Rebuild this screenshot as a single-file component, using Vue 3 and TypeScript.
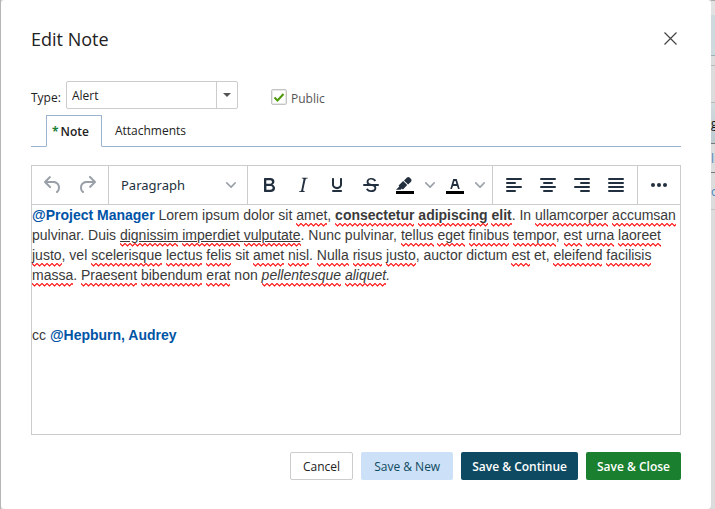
<script setup lang="ts">
import { ref } from 'vue'

interface Tool {
  name: string
  paths: string[]
}

const noteType = ref('Alert')
const isPublic = ref(true)
const activeTab = ref('note')

const history: Tool[] = [
  { name: 'Undo', paths: ['M6.4 8H12c3.7 0 6.2 2 6.8 5.1.6 2.7-.4 5.6-2.3 6.8a1 1 0 01-1-1.8c1.1-.6 1.8-2.7 1.4-4.6-.5-2.1-2.1-3.5-4.9-3.5H6.4l3.3 3.3a1 1 0 11-1.4 1.4l-5-5a1 1 0 010-1.4l5-5a1 1 0 011.4 1.4L6.4 8z'] },
  { name: 'Redo', paths: ['M17.6 10H12c-2.8 0-4.4 1.4-4.9 3.5-.4 2 .3 4 1.4 4.6a1 1 0 11-1 1.8c-2-1.2-2.9-4.1-2.3-6.8.6-3 3-5.1 6.8-5.1h5.6l-3.3-3.3a1 1 0 111.4-1.4l5 5a1 1 0 010 1.4l-5 5a1 1 0 01-1.4-1.4l3.3-3.3z'] },
]

const formats: Tool[] = [
  { name: 'Bold', paths: ['M7.8 19c-.3 0-.5 0-.6-.2l-.2-.5V5.7c0-.2 0-.4.2-.5l.6-.2h5c1.5 0 2.7.3 3.5 1 .7.6 1.1 1.4 1.1 2.5a3 3 0 01-.6 1.9c-.4.6-1 1-1.6 1.2.4.1.9.3 1.3.6s.8.7 1 1.2c.4.4.5 1 .5 1.6 0 1.3-.4 2.3-1.3 3-.8.7-2.1 1-3.8 1H7.8zm5-8.3c.6 0 1.2-.1 1.6-.5.4-.3.6-.7.6-1.3 0-1.1-.8-1.7-2.3-1.7H9.3v3.5h3.4zm.5 6c.7 0 1.3-.1 1.7-.4.4-.4.6-.9.6-1.5s-.2-1-.7-1.4c-.4-.3-1-.4-2-.4H9.4v3.8h4z'] },
  { name: 'Italic', paths: ['M16.7 4.7l-.1.9h-.3c-.6 0-1 0-1.4.3-.3.3-.4.6-.5 1.1l-2.1 9.8v.6c0 .5.4.8 1.4.8h.2l-.2.8H8l.2-.8h.2c1.1 0 1.8-.5 2-1.5l2-9.8.1-.5c0-.6-.4-.8-1.4-.8h-.3l.2-.9h5.8z'] },
  { name: 'Underline', paths: ['M16 5c.6 0 1 .4 1 1v5.5a4 4 0 01-.4 1.8l-1 1.4a5.3 5.3 0 01-5.5 1 5 5 0 01-1.6-1c-.5-.4-.8-.9-1.1-1.4a4 4 0 01-.4-1.8V6c0-.6.4-1 1-1s1 .4 1 1v5.5c0 .3 0 .6.2 1l.6.7a3.3 3.3 0 002.2.8 3.4 3.4 0 002.2-.8c.3-.2.4-.5.6-.8l.2-.9V6c0-.6.4-1 1-1zM8 17h8c.6 0 1 .4 1 1s-.4 1-1 1H8a1 1 0 010-2z'] },
  { name: 'Strikethrough', paths: ['M15.6 8.5c-.5-.7-1-1.1-1.3-1.3-.6-.4-1.3-.6-2-.6-2.7 0-2.8 1.7-2.8 2.1 0 1.6 1.8 2 3.2 2.3 4.4.9 4.6 2.8 4.6 3.9 0 1.4-.7 4.1-5 4.1A6.2 6.2 0 017 16.4l1.5-1.1c.4.6 1.6 2 3.7 2 1.6 0 2.5-.4 3-1.2.4-.8.3-2-.8-2.6-.7-.4-1.6-.7-2.9-1-1-.2-3.9-.8-3.9-3.6C7.6 6 10.3 5 12.4 5c2.9 0 4.2 1.6 4.7 2.4l-1.5 1.1z', 'M5 11h14a1 1 0 010 2H5a1 1 0 010-2z'] },
]

const colours: Tool[] = [
  { name: 'Background color', paths: ['M7.7 16.7H3l3.3-3.3-.7-.8L10.2 8l4 4.1-4 4.2c-.2.2-.6.2-.8 0l-.6-.7-1.1 1.1zm5-7.5L11 7.4l3-2.9a2 2 0 012.6 0L18 6c.7.7.7 2 0 2.7l-2.9 2.9-1.8-1.8-.5-.6'] },
  { name: 'Text color', paths: ['M8.7 16h-.8a.5.5 0 01-.5-.6l2.7-9c.1-.3.3-.4.5-.4h2.8c.2 0 .4.1.5.4l2.7 9a.5.5 0 01-.5.6h-.8a.5.5 0 01-.4-.4l-.7-2.2c0-.3-.3-.4-.5-.4h-3.4c-.2 0-.4.1-.5.4l-.7 2.2c0 .3-.2.4-.4.4zm2.6-7.6l-.6 2a.5.5 0 00.5.6h1.6a.5.5 0 00.5-.6l-.6-2c0-.3-.3-.4-.5-.4h-.4c-.2 0-.4.1-.5.4z'] },
]

const aligns: Tool[] = [
  { name: 'Align left', paths: ['M5 5h14a1 1 0 010 2H5a1 1 0 010-2zM5 9h8a1 1 0 010 2H5a1 1 0 010-2zM5 13h14a1 1 0 010 2H5a1 1 0 010-2zM5 17h8a1 1 0 010 2H5a1 1 0 010-2z'] },
  { name: 'Align center', paths: ['M5 5h14a1 1 0 010 2H5a1 1 0 010-2zM8 9h8a1 1 0 010 2H8a1 1 0 010-2zM5 13h14a1 1 0 010 2H5a1 1 0 010-2zM8 17h8a1 1 0 010 2H8a1 1 0 010-2z'] },
  { name: 'Align right', paths: ['M5 5h14a1 1 0 010 2H5a1 1 0 010-2zM11 9h8a1 1 0 010 2h-8a1 1 0 010-2zM5 13h14a1 1 0 010 2H5a1 1 0 010-2zM11 17h8a1 1 0 010 2h-8a1 1 0 010-2z'] },
  { name: 'Justify', paths: ['M5 5h14a1 1 0 010 2H5a1 1 0 010-2zM5 9h14a1 1 0 010 2H5a1 1 0 010-2zM5 13h14a1 1 0 010 2H5a1 1 0 010-2zM5 17h14a1 1 0 010 2H5a1 1 0 010-2z'] },
]

const chevron = 'M8.7 2.2c.3-.3.8-.3 1 0 .4.4.4.9 0 1.2L5.7 7.8c-.3.3-.9.3-1.2 0L.2 3.4a.8.8 0 010-1.2c.3-.3.8-.3 1.1 0L5 6l3.7-3.8z'
</script>

<template>
  <div class="screen">
    <div class="edge left" aria-hidden="true"></div>

    <main class="dialog" role="dialog" aria-labelledby="dialog-title">
      <header class="head">
        <h1 id="dialog-title">Edit Note</h1>
        <button class="close" type="button" aria-label="Close">
          <svg width="13" height="13" viewBox="0 0 13 13"><path d="M.5.5l12 12M12.5.5l-12 12" fill="none" stroke="#444" stroke-width="1.2" /></svg>
        </button>
      </header>

      <form class="fields" @submit.prevent>
        <label for="note-type">Type:</label>
        <div class="combo">
          <select id="note-type" v-model="noteType">
            <option>Alert</option>
            <option>General</option>
          </select>
          <span class="trigger" aria-hidden="true"><svg width="8" height="4" viewBox="0 0 8 4"><path d="M0 0h8L4 4z" fill="#555" /></svg></span>
        </div>
        <label class="public">
          <input v-model="isPublic" type="checkbox" />
          <span>Public</span>
        </label>
      </form>

      <nav class="tabs" role="tablist">
        <button type="button" role="tab" :class="['tab', { active: activeTab === 'note' }]" @click="activeTab = 'note'">
          <span class="required">*</span>Note
        </button>
        <button type="button" role="tab" :class="['tab', { active: activeTab === 'files' }]" @click="activeTab = 'files'">Attachments</button>
      </nav>

      <section class="editor">
        <div class="toolbar" role="toolbar" aria-label="Formatting">
          <div class="group history">
            <button v-for="t in history" :key="t.name" class="tool" type="button" :aria-label="t.name">
              <svg width="24" height="24" viewBox="0 0 24 24"><path v-for="p in t.paths" :key="p" :d="p" /></svg>
            </button>
          </div>
          <div class="group block">
            <button class="format" type="button">
              <span>Paragraph</span>
              <svg class="chevron" width="10" height="10" viewBox="0 0 10 10"><path :d="chevron" /></svg>
            </button>
          </div>
          <div class="group">
            <button v-for="t in formats" :key="t.name" class="tool" type="button" :aria-label="t.name">
              <svg width="24" height="24" viewBox="0 0 24 24"><path v-for="p in t.paths" :key="p" :d="p" /></svg>
            </button>
            <div v-for="t in colours" :key="t.name" class="split">
              <button class="tool" type="button" :aria-label="t.name">
                <svg width="24" height="24" viewBox="0 0 24 24"><path d="M3 18h18v3H3z" fill="#000" /><path v-for="p in t.paths" :key="p" :d="p" /></svg>
              </button>
              <button class="more" type="button" :aria-label="t.name + ' menu'">
                <svg class="chevron" width="10" height="10" viewBox="0 0 10 10"><path :d="chevron" /></svg>
              </button>
            </div>
          </div>
          <div class="group">
            <button v-for="t in aligns" :key="t.name" class="tool" type="button" :aria-label="t.name">
              <svg width="24" height="24" viewBox="0 0 24 24"><path v-for="p in t.paths" :key="p" :d="p" /></svg>
            </button>
          </div>
          <div class="group">
            <button class="tool" type="button" aria-label="More">
              <svg width="24" height="24" viewBox="0 0 24 24"><circle cx="6" cy="12" r="2" /><circle cx="12" cy="12" r="2" /><circle cx="18" cy="12" r="2" /></svg>
            </button>
          </div>
        </div>

        <div class="body" contenteditable="true" spellcheck="false">
          <p><a class="mention" href="#">@Project Manager</a> Lorem ipsum dolor sit <i class="sp">amet</i>, <b><i class="sp">consectetur</i> <i class="sp">adipiscing</i> <i class="sp">elit</i></b>. In <i class="sp">ullamcorper</i> <i class="sp">accumsan</i> pulvinar. Duis <u><i class="sp">dignissim</i> <i class="sp">imperdiet</i> <i class="sp">vulputate</i></u>. Nunc pulvinar, <i class="sp">tellus</i> <i class="sp">eget</i> <i class="sp">finibus</i> <i class="sp">tempor</i>, <i class="sp">est</i> <i class="sp">urna</i> <i class="sp">laoreet</i> <i class="sp">justo</i>, vel <i class="sp">scelerisque</i> <i class="sp">lectus</i> <i class="sp">felis</i> sit <i class="sp">amet</i> <i class="sp">nisl</i>. <i class="sp">Nulla</i> <i class="sp">risus</i> <i class="sp">justo</i>, auctor dictum <i class="sp">est</i> et, <i class="sp">eleifend</i> <i class="sp">facilisis</i> <i class="sp">massa</i>. <i class="sp">Praesent</i> <i class="sp">bibendum</i> <i class="sp">erat</i> non <em><i class="sp">pellentesque</i> <i class="sp">aliquet</i>.</em></p>
          <p><br /></p>
          <p><br /></p>
          <p>cc <a class="mention" href="#">@Hepburn, Audrey</a></p>
        </div>
      </section>

      <footer class="actions">
        <button class="btn cancel" type="button">Cancel</button>
        <button class="btn light" type="button">Save &amp; New</button>
        <button class="btn navy" type="button">Save &amp; Continue</button>
        <button class="btn green" type="button">Save &amp; Close</button>
      </footer>
    </main>

    <div class="edge right" aria-hidden="true">
      <div class="strip top"></div>
      <div class="strip banner"></div>
      <div class="strip thin"></div>
      <div class="strip bar"></div>
      <div class="strip header">g</div>
      <div class="strip row link">li</div>
      <div class="strip row last">o</div>
    </div>
  </div>
</template>

<style>
body {
  margin: 0;
}
</style>

<style scoped>
.screen {
  display: grid;
  grid-template-columns: 1px 1fr 4px;
  min-height: 100vh;
  background: #dadada;
  font-family: 'Open Sans', 'Noto Sans', sans-serif;
  font-size: 12px;
  color: #222;
}
.screen *,
.screen *::before {
  box-sizing: border-box;
}
button,
select,
input {
  font: inherit;
  color: inherit;
  margin: 0;
}
button {
  padding: 0;
  border: 0;
  background: none;
}
.edge {
  overflow: hidden;
}
.left {
  background: #b4b6b7;
}
.dialog {
  display: flex;
  flex-direction: column;
  padding: 24px 30px 29px;
  background: #fff;
  border-radius: 4px;
}
.head {
  display: flex;
  align-items: center;
  justify-content: space-between;
  height: 29px;
}
h1 {
  margin: 0;
  font-size: 18px;
  font-weight: 400;
  line-height: 28px;
}
.close {
  display: flex;
  padding: 4px;
}
.fields {
  display: flex;
  align-items: center;
  margin-top: 28px;
  height: 28px;
}
.fields > label:first-child {
  width: 35px;
  padding-top: 4px;
}
.combo {
  display: grid;
  grid-template-columns: 1fr 21px;
  width: 172px;
  height: 28px;
  border: 1px solid #ccc;
  border-radius: 2px;
}
.combo select {
  grid-area: 1 / 1 / 2 / 3;
  appearance: none;
  padding: 0 5px;
  border: 0;
  background: none;
}
.trigger {
  grid-area: 1 / 2;
  display: flex;
  align-items: center;
  justify-content: center;
  border-left: 1px solid #ccc;
  pointer-events: none;
}
.public {
  display: flex;
  align-items: center;
  gap: 4px;
  margin-left: 33px;
  padding-top: 4px;
  color: #555;
}
.public span {
  padding-top: 2px;
}
.public input {
  appearance: none;
  width: 16px;
  height: 16px;
  border: 1px solid #c4c4c4;
  border-radius: 2px;
  box-shadow: inset 0 0 0 1px #e8e8e8;
}
.public input:checked {
  background: url("data:image/svg+xml,%3Csvg xmlns='http://www.w3.org/2000/svg' viewBox='0 0 14 14'%3E%3Cpath d='M2.5 7.5l3 3 6-6.5' fill='none' stroke='%234c9a0b' stroke-width='2'/%3E%3C/svg%3E") center / 14px 14px no-repeat;
}
.tabs {
  display: flex;
  margin-top: 6px;
  padding-left: 15px;
  height: 32px;
  border-bottom: 1px solid #9ab4cf;
}
.tab {
  height: 32px;
  padding: 0 13px;
  border-bottom: 1px solid #9ab4cf;
}
.tab.active {
  padding: 1px 12px 0 5px;
  border: 1px solid #9ab4cf;
  border-bottom-color: #fff;
  font-weight: 600;
}
.required {
  margin-right: 2px;
  font-weight: 700;
  color: #1a7f37;
}
.editor {
  display: flex;
  flex: 1;
  flex-direction: column;
  margin-top: 18px;
  border: 1px solid #ccc;
}
.toolbar {
  display: flex;
  height: 39px;
  border-bottom: 1px solid #ccc;
}
.group {
  display: flex;
  align-items: center;
  padding: 0 4px;
  border-right: 1px solid #ccc;
}
.group:last-child {
  border-right: 0;
}
.block {
  flex: 1;
}
.tool {
  display: flex;
  align-items: center;
  justify-content: center;
  width: 34px;
  height: 34px;
}
svg {
  fill: #222f3e;
}
.history svg,
.chevron {
  fill: #99a0a8;
}
.format {
  display: flex;
  flex: 1;
  align-items: center;
  justify-content: space-between;
  padding: 0 7px 0 8px;
  font-family: 'Noto Sans', sans-serif;
  font-size: 13px;
  line-height: 34px;
  color: #222f3e;
}
.split {
  display: flex;
}
.more {
  display: flex;
  align-items: center;
  justify-content: center;
  width: 16px;
}
.body {
  flex: 1;
  font-family: 'Liberation Sans', Arial, sans-serif;
  font-size: 14px;
  line-height: 20px;
  color: #3a3a3a;
}
.body p {
  margin: 0;
}
.mention {
  color: #0054a6;
  font-weight: 700;
  text-decoration: none;
}
.sp {
  padding-bottom: 4px;
  font-style: inherit;
  background: url("data:image/svg+xml,%3Csvg xmlns='http://www.w3.org/2000/svg' width='5' height='4' viewBox='0 0 5 4'%3E%3Cpath d='M-.5 0L2.5 3 5.5 0' fill='none' stroke='%23f11' stroke-width='1.2'/%3E%3C/svg%3E") 0 100% / 5px 4px repeat-x;
}
.actions {
  display: flex;
  justify-content: flex-end;
  gap: 8px;
  margin-top: 17px;
}
.btn {
  height: 28px;
  padding: 0 11px;
  border-radius: 2px;
}
.cancel {
  padding: 0 12px;
  border: 1px solid #ccc;
}
.light {
  padding: 0 13px;
  background: #cce1f7;
  color: #0e4a61;
}
.navy {
  background: #0e4a61;
  color: #fff;
  font-weight: 600;
}
.green {
  background: #1a7f2f;
  color: #fff;
  font-weight: 600;
}
.right {
  background: #dcdcdc;
  white-space: nowrap;
}
.strip {
  overflow: hidden;
}
.top {
  height: 15px;
  border-top: 1px solid #aaa;
  background: #e2e2e2;
}
.banner {
  height: 41px;
  border-bottom: 1px solid #9bb0b8;
  background: #cfdadf;
}
.thin {
  height: 10px;
  border-bottom: 1px solid #b8b8b8;
}
.bar {
  height: 37px;
  border-bottom: 1px solid #b8b8b8;
}
.header {
  height: 41px;
  border-bottom: 1px solid #777;
  background: linear-gradient(#d3dcdf, #bccad1);
  line-height: 41px;
  color: #111;
}
.row {
  height: 29px;
  border-bottom: 1px solid #777;
  line-height: 29px;
  color: #4a86bd;
}
.last {
  height: 37px;
  border-bottom-color: #c4c4c4;
  line-height: 37px;
}
</style>
